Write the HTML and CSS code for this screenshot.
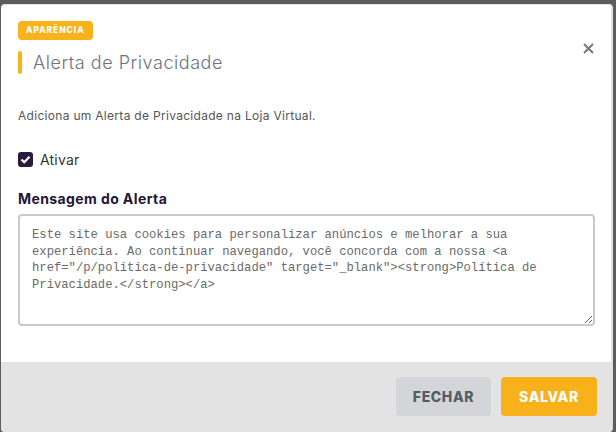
FILE: index.html
```html
<!DOCTYPE html>
<html lang="pt-BR">
<head>
    <meta charset="UTF-8">
    <meta name="viewport" content="width=device-width, initial-scale=1.0">
    <title>Alerta de Privacidade</title>
    <link rel="stylesheet" href="styles.css">
</head>
<body>
    <div class="modal">
        <div class="modal-header">
            <span class="badge">Aparência</span>
            <div class="title-row">
                <span class="title-bar"></span>
                <h2 class="modal-title">Alerta de Privacidade</h2>
            </div>
            <button class="close-button" aria-label="Fechar">
                <svg width="11" height="11" viewBox="0 0 11 11">
                    <path d="M1 1 L10 10 M10 1 L1 10" stroke="#777" stroke-width="2" stroke-linecap="butt"/>
                </svg>
            </button>
        </div>

        <div class="modal-body">
            <p class="description">Adiciona um Alerta de Privacidade na Loja Virtual.</p>

            <label class="check-row">
                <span class="checkbox">
                    <svg width="11" height="9" viewBox="0 0 11 9">
                        <path d="M1.5 4.5 L4.2 7.2 L9.5 1.8" fill="none" stroke="#fff" stroke-width="2.2"/>
                    </svg>
                </span>
                <span class="check-label">Ativar</span>
            </label>

            <div class="field-label">Mensagem do Alerta</div>
            <textarea class="message-input">Este site usa cookies para personalizar anúncios e melhorar a sua experiência. Ao continuar navegando, você concorda com a nossa &lt;a href="/p/politica-de-privacidade" target="_blank"&gt;&lt;strong&gt;Política de Privacidade.&lt;/strong&gt;&lt;/a&gt;</textarea>
        </div>

        <div class="modal-footer">
            <button class="btn btn-close">Fechar</button>
            <button class="btn btn-save">Salvar</button>
        </div>
    </div>
</body>
</html>
```

FILE: styles.css
```css
* {
    margin: 0;
    padding: 0;
    box-sizing: border-box;
}

body {
    font-family: 'Inter', 'Open Sans', sans-serif;
    background-color: #5c5c5c;
    height: 432px;
    overflow: hidden;
    padding: 4px 3px 0 1px;
}

.modal {
    background: #ffffff;
    border-top: 1px solid #e6e6e6;
    border-right: 2px solid #e0e0e0;
    border-radius: 4px;
    height: 428px;
    display: flex;
    flex-direction: column;
    overflow: hidden;
}

.modal-header {
    position: relative;
    display: flex;
    flex-direction: column;
    align-items: flex-start;
    padding: 16px 17px 0;
}

.badge {
    display: block;
    height: 19px;
    line-height: 19px;
    padding: 0 8px;
    background: #f8b21c;
    color: #ffffff;
    border-radius: 4px;
    font-size: 8.5px;
    font-weight: 800;
    text-transform: uppercase;
    letter-spacing: 0.9px;
}

.title-row {
    display: flex;
    align-items: center;
    gap: 11px;
    margin-top: 11px;
    height: 23px;
}

.title-bar {
    width: 4px;
    height: 23px;
    background: #f8b21c;
    border-radius: 2px;
}

.modal-title {
    font-size: 18px;
    font-weight: 300;
    color: #6c7283;
    letter-spacing: 0.55px;
}

.close-button {
    position: absolute;
    top: 37px;
    right: 17px;
    background: transparent;
    border: none;
    cursor: pointer;
    width: 11px;
    height: 11px;
}

.modal-body {
    padding: 0 15px 36px 17px;
}

.description {
    margin-top: 33px;
    font-size: 12px;
    line-height: 18px;
    color: #555555;
    letter-spacing: 0.3px;
}

.check-row {
    display: flex;
    align-items: center;
    gap: 7px;
    margin-top: 26px;
    height: 16px;
}

.checkbox {
    width: 15px;
    height: 15px;
    border-radius: 3px;
    background: #2a1b3d;
    display: flex;
    align-items: center;
    justify-content: center;
}

.check-label {
    font-size: 14px;
    color: #333333;
    letter-spacing: 0.2px;
}

.field-label {
    margin-top: 22px;
    height: 20px;
    line-height: 20px;
    font-size: 14px;
    font-weight: 700;
    color: #231736;
    letter-spacing: 0.4px;
}

.message-input {
    display: block;
    margin-top: 5px;
    width: 577px;
    height: 112px;
    padding: 11px 12px 10px;
    border: 2px solid #c9c9c9;
    border-radius: 4px;
    font-family: 'Liberation Mono', 'DejaVu Sans Mono', monospace;
    font-size: 12.2px;
    line-height: 16.5px;
    color: #6a6a6a;
    resize: vertical;
}

.modal-footer {
    margin-top: auto;
    flex: 1;
    background: #e3e3e3;
    display: flex;
    justify-content: flex-end;
    align-items: flex-start;
    gap: 10px;
    padding: 15px 14px;
}

.btn {
    height: 39px;
    border: none;
    border-radius: 4px;
    font-family: inherit;
    font-size: 14px;
    font-weight: 800;
    text-transform: uppercase;
    letter-spacing: 0.6px;
    cursor: pointer;
}

.btn-close {
    width: 95px;
    background: #d4d5d8;
    color: #555c66;
}

.btn-save {
    width: 96px;
    background: #f8b11a;
    color: #ffffff;
}
```
